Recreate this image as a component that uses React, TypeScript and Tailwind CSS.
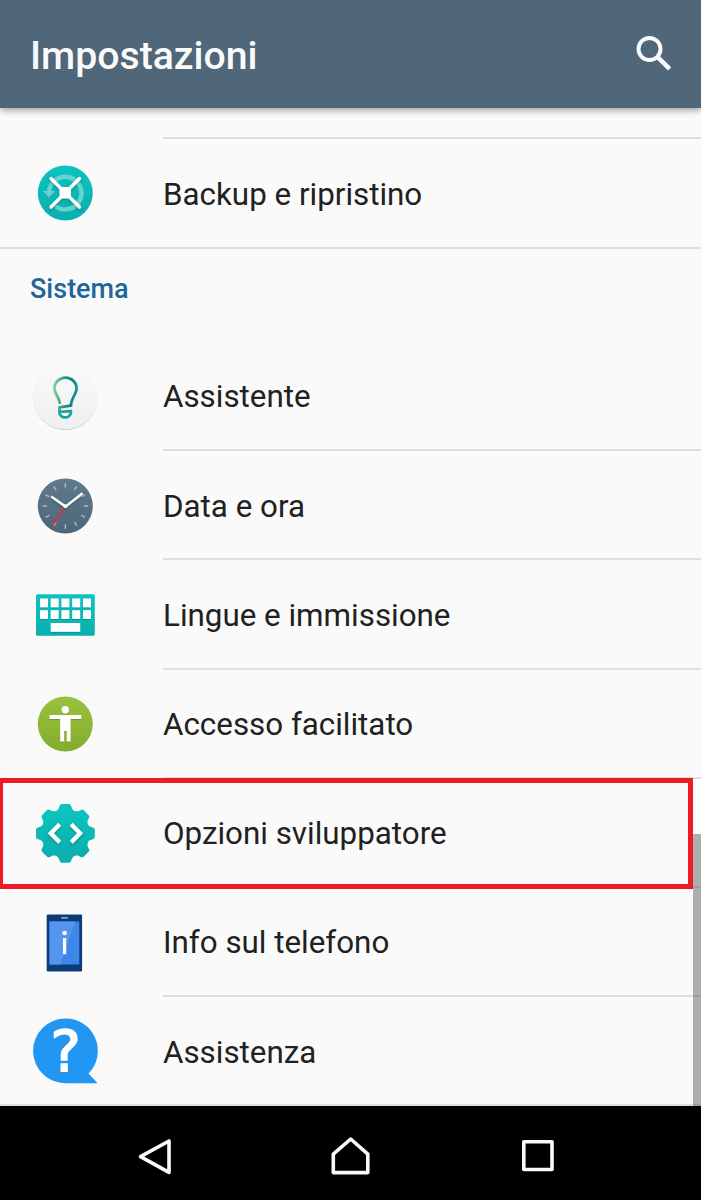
import type { ReactNode } from "react";

function IconFrame({ children }: { children: ReactNode }) {
  return (
    <svg viewBox="-33 -33 66 66" className="h-[66px] w-[66px] shrink-0 overflow-visible" aria-hidden="true">
      <defs>
        <linearGradient id="teal" x1="0" y1="0" x2="0" y2="1">
          <stop offset="0" stopColor="#0cc3c0" />
          <stop offset="1" stopColor="#0aafae" />
        </linearGradient>
        <linearGradient id="lime" x1="0" y1="0" x2="0" y2="1">
          <stop offset="0" stopColor="#98c13f" />
          <stop offset="1" stopColor="#84ad2d" />
        </linearGradient>
        <linearGradient id="slate" x1="0" y1="0" x2="0" y2="1">
          <stop offset="0" stopColor="#607a8e" />
          <stop offset="1" stopColor="#4d6679" />
        </linearGradient>
        <linearGradient id="bulb" gradientUnits="userSpaceOnUse" x1="-12" y1="-8" x2="12" y2="-6">
          <stop offset="0" stopColor="#93d3a0" />
          <stop offset="0.45" stopColor="#1f9a86" />
          <stop offset="0.75" stopColor="#0e7f80" />
          <stop offset="1" stopColor="#16999a" />
        </linearGradient>
        <linearGradient id="disc" x1="0" y1="0" x2="0" y2="1">
          <stop offset="0" stopColor="#fafafa" />
          <stop offset="1" stopColor="#efefef" />
        </linearGradient>
        <filter id="drop" x="-30%" y="-30%" width="160%" height="170%">
          <feDropShadow dx="0" dy="1.5" stdDeviation="1.5" floodColor="#003c40" floodOpacity="0.35" />
        </filter>
        <filter id="soft" x="-10%" y="-10%" width="120%" height="125%">
          <feDropShadow dx="0" dy="0.8" stdDeviation="0.7" floodColor="#000" floodOpacity="0.25" />
        </filter>
      </defs>
      {children}
    </svg>
  );
}

function BackupIcon() {
  return (
    <IconFrame>
      <circle cx="0.3" r="27.5" fill="url(#teal)" />
      <path d="M-15.7 -3.5A16.3 16.3 0 1 1 -9.5 13.2" fill="none" stroke="#67d2cf" strokeWidth="4.4" />
      <path d="M-17.9 -4H-13.5V-2H-10L-16 4.5L-22 -2H-17.9Z" fill="#67d2cf" />
      <g filter="url(#drop)">
        <path d="M-14 -14.5L14.5 14M14.5 -14.5L-14 14" stroke="#fff" strokeWidth="3.2" strokeLinecap="round" />
        <rect x="-5.5" y="-6" width="11.5" height="11.5" rx="3.5" fill="#fff" />
      </g>
    </IconFrame>
  );
}

function AssistantIcon() {
  return (
    <IconFrame>
      <circle cx="0.3" cy="0" r="32.2" fill="url(#disc)" filter="url(#soft)" />
      <g fill="none" strokeWidth="2.7">
        <path
          d="M-5 6.8C-6 -0.5 -10.6 -3 -10.6 -8.6A11.1 10.8 0 0 1 11.6 -8.6C11.6 -3 6 1.5 6 8.6L-5.6 10.4V15"
          stroke="url(#bulb)"
        />
        <path d="M-5.6 14.9L5.9 14.1V15.2A5.75 5.2 0 0 1 -5.6 15.2Z" stroke="#17a5a3" />
      </g>
    </IconFrame>
  );
}

const clockTicks = [0, 30, 60, 90, 120, 150, 180, 210, 240, 270, 300, 330];

function ClockIcon() {
  return (
    <IconFrame>
      <circle cx="0.3" r="27.5" fill="url(#slate)" />
      {clockTicks.map((a) => (
        <path key={a} d="M0 -22.8V-18.4" transform={`translate(0.3 0) rotate(${a})`} stroke="#a9b8c2" strokeWidth="1.5" />
      ))}
      <path d="M1 0L-12.5 19.5" stroke="#d9343b" strokeWidth="1.8" />
      <g filter="url(#drop)">
        <path d="M-13.7 -9.5L0.5 0.6L17.5 -12.8" fill="none" stroke="#fff" strokeWidth="2.4" strokeLinejoin="round" />
        <circle cx="0.5" cy="0.2" r="1.9" fill="#fff" />
      </g>
    </IconFrame>
  );
}

const keyColumns = [-25, -14.3, -3.6, 7.2, 18];

function KeyboardIcon() {
  return (
    <IconFrame>
      <rect x="-29" y="-20.7" width="58.8" height="41.4" rx="1.5" fill="url(#teal)" />
      <g fill="#fff" filter="url(#soft)">
        {keyColumns.map((x) => (
          <g key={x}>
            <rect x={x} y="-16.5" width="8" height="8.8" />
            <rect x={x} y="-4.8" width="8" height="8.8" />
          </g>
        ))}
        <rect x="-14.3" y="8" width="29.5" height="8.8" />
      </g>
    </IconFrame>
  );
}

function AccessibilityIcon() {
  return (
    <IconFrame>
      <circle cx="0.3" r="27.5" fill="url(#lime)" />
      <g fill="#fff" filter="url(#soft)">
        <circle cx="0.3" cy="-14.3" r="3.7" />
        <path d="M-15.5 -9H16.2V-5H5.6V17.5H1.7V7H-0.8V17.5H-4.8V-5H-15.5Z" />
      </g>
    </IconFrame>
  );
}

const gearTeeth = [0, 45, 90, 135, 180, 225, 270, 315];

function DeveloperIcon() {
  return (
    <IconFrame>
      <g transform="translate(0.4 0.4)" fill="url(#teal)">
        <circle r="24.2" />
        {gearTeeth.map((a) => (
          <path
            key={a}
            d="M-9.4 -22C-7 -23.8 -6.4 -25 -5.8 -27.4Q-5.3 -29.4 -3.6 -29.4H3.6Q5.3 -29.4 5.8 -27.4C6.4 -25 7 -23.8 9.4 -22Z"
            transform={`rotate(${a})`}
            fill={a === 0 || a === 45 || a === 315 ? "#0cc2bf" : a === 90 || a === 270 ? "#0bb9b7" : "#0ab0ae"}
          />
        ))}
      </g>
      <path
        d="M-5.3 -8.8L-14.2 0.2L-5.3 9.2M6.2 -8.8L15.1 0.2L6.2 9.2"
        fill="none"
        stroke="#fff"
        strokeWidth="4.2"
        filter="url(#drop)"
      />
    </IconFrame>
  );
}

function PhoneInfoIcon() {
  return (
    <IconFrame>
      <rect x="-18.3" y="-28.5" width="35.4" height="57" rx="1.2" fill="#0b3b78" />
      <rect x="-15.5" y="-21.5" width="29.8" height="43" fill="#3f86ea" />
      <path d="M-15.5 -21.5H10.5L-5 21.5H-15.5Z" fill="#5495ee" />
      <rect x="-4" y="-25.8" width="7" height="1.3" rx="0.6" fill="#b7c9df" />
      <g fill="#fff">
        <circle cx="-0.4" cy="-10" r="2.3" />
        <rect x="-2" y="-5" width="3.2" height="16.2" />
      </g>
    </IconFrame>
  );
}

function HelpIcon() {
  return (
    <IconFrame>
      <path d="M0.4 -32.5A32.3 32.3 0 0 1 23.5 22.5L32.6 32.2H0.4A32.3 32.3 0 0 1 0.4 -32.5Z" fill="#2196f3" />
      <text
        x="0.5"
        y="21.3"
        textAnchor="middle"
        fill="#fff"
        stroke="#fff"
        strokeWidth="1.6"
        fontSize="57"
        className="font-['DejaVu_Sans',sans-serif]"
      >
        ?
      </text>
    </IconFrame>
  );
}

type Item = { label: string; icon: ReactNode; last?: boolean; marked?: boolean };

const systemItems: Item[] = [
  { label: "Assistente", icon: <AssistantIcon /> },
  { label: "Data e ora", icon: <ClockIcon /> },
  { label: "Lingue e immissione", icon: <KeyboardIcon /> },
  { label: "Accesso facilitato", icon: <AccessibilityIcon /> },
  { label: "Opzioni sviluppatore", icon: <DeveloperIcon />, marked: true },
  { label: "Info sul telefono", icon: <PhoneInfoIcon /> },
  { label: "Assistenza", icon: <HelpIcon />, last: true },
];

function Row({ label, icon, last, marked }: Item) {
  return (
    <li className={`relative flex h-[109.2px] ${last ? "border-b-2 border-[#dfdfdf]" : ""}`}>
      <div className="flex w-[163px] shrink-0 items-center pl-8">{icon}</div>
      <div className={`flex grow items-center pt-[3px] ${last ? "" : "border-b-2 border-[#dfdfdf]"}`}>
        <span className="text-[31.35px] leading-none whitespace-nowrap">{label}</span>
      </div>
      {marked && (
        <div className="absolute -top-px left-0 h-[111px] w-[693px] border-5 border-l-3 border-[#ed1c24]" />
      )}
    </li>
  );
}

export default function App() {
  return (
    <div className="relative flex h-[1200px] w-[701px] flex-col overflow-hidden bg-[#fafafa] font-[Roboto,sans-serif] text-[#212121]">
      <header className="z-10 flex h-[108px] shrink-0 items-center justify-between bg-[#506679] pr-[29px] pl-[30px] shadow-[0_2px_7px_rgba(0,0,0,0.4)]">
        <h1 className="pt-[6px] text-[39.2px] leading-none font-medium text-[#fafafa]">Impostazioni</h1>
        <svg viewBox="0 0 36 36" className="h-9 w-9" fill="none" stroke="#fafafa" aria-hidden="true">
          <circle cx="13.5" cy="13" r="11" strokeWidth="3.9" />
          <path d="M22.2 21.7L33.6 32.8" strokeWidth="4.6" />
        </svg>
      </header>

      <main className="flex h-[998px] shrink-0 flex-col">
        <div className="ml-[163px] h-[31.4px] shrink-0 border-b-2 border-[#dfdfdf]" />
        <ul>
          <Row label="Backup e ripristino" icon={<BackupIcon />} last />
        </ul>
        <h2 className="flex h-[93.4px] shrink-0 items-start pt-[27px] pl-[30px] text-[27px] leading-none font-medium text-[#1f659b]">
          Sistema
        </h2>
        <ul>
          {systemItems.map((item) => (
            <Row key={item.label} {...item} />
          ))}
        </ul>
      </main>

      <div className="absolute top-[779px] right-0 h-[55px] w-2 bg-white" />
      <div className="absolute top-[834px] right-0 h-[272px] w-2 bg-black/30" />

      <nav className="z-10 flex grow items-center justify-between bg-black pt-[5px] pr-[147px] pl-[137px]">
        <svg viewBox="0 0 36 40" className="h-10 w-9" fill="none" stroke="#fafafa" strokeWidth="3.6" strokeLinejoin="round" aria-hidden="true">
          <path d="M32 5V36.4L3.5 20.7Z" />
        </svg>
        <svg viewBox="0 0 40 40" className="ml-[9px] h-10 w-10" fill="none" stroke="#fafafa" strokeWidth="3.6" strokeLinejoin="round" aria-hidden="true">
          <path d="M2.3 36.6V18.2L19.7 3L36.8 18.2V36.6Z" />
        </svg>
        <svg viewBox="0 0 34 34" className="h-[34px] w-[34px]" fill="none" stroke="#fafafa" strokeWidth="3.6" strokeLinejoin="round" aria-hidden="true">
          <rect x="3.8" y="2.8" width="28.2" height="27.7" />
        </svg>
      </nav>
    </div>
  );
}
